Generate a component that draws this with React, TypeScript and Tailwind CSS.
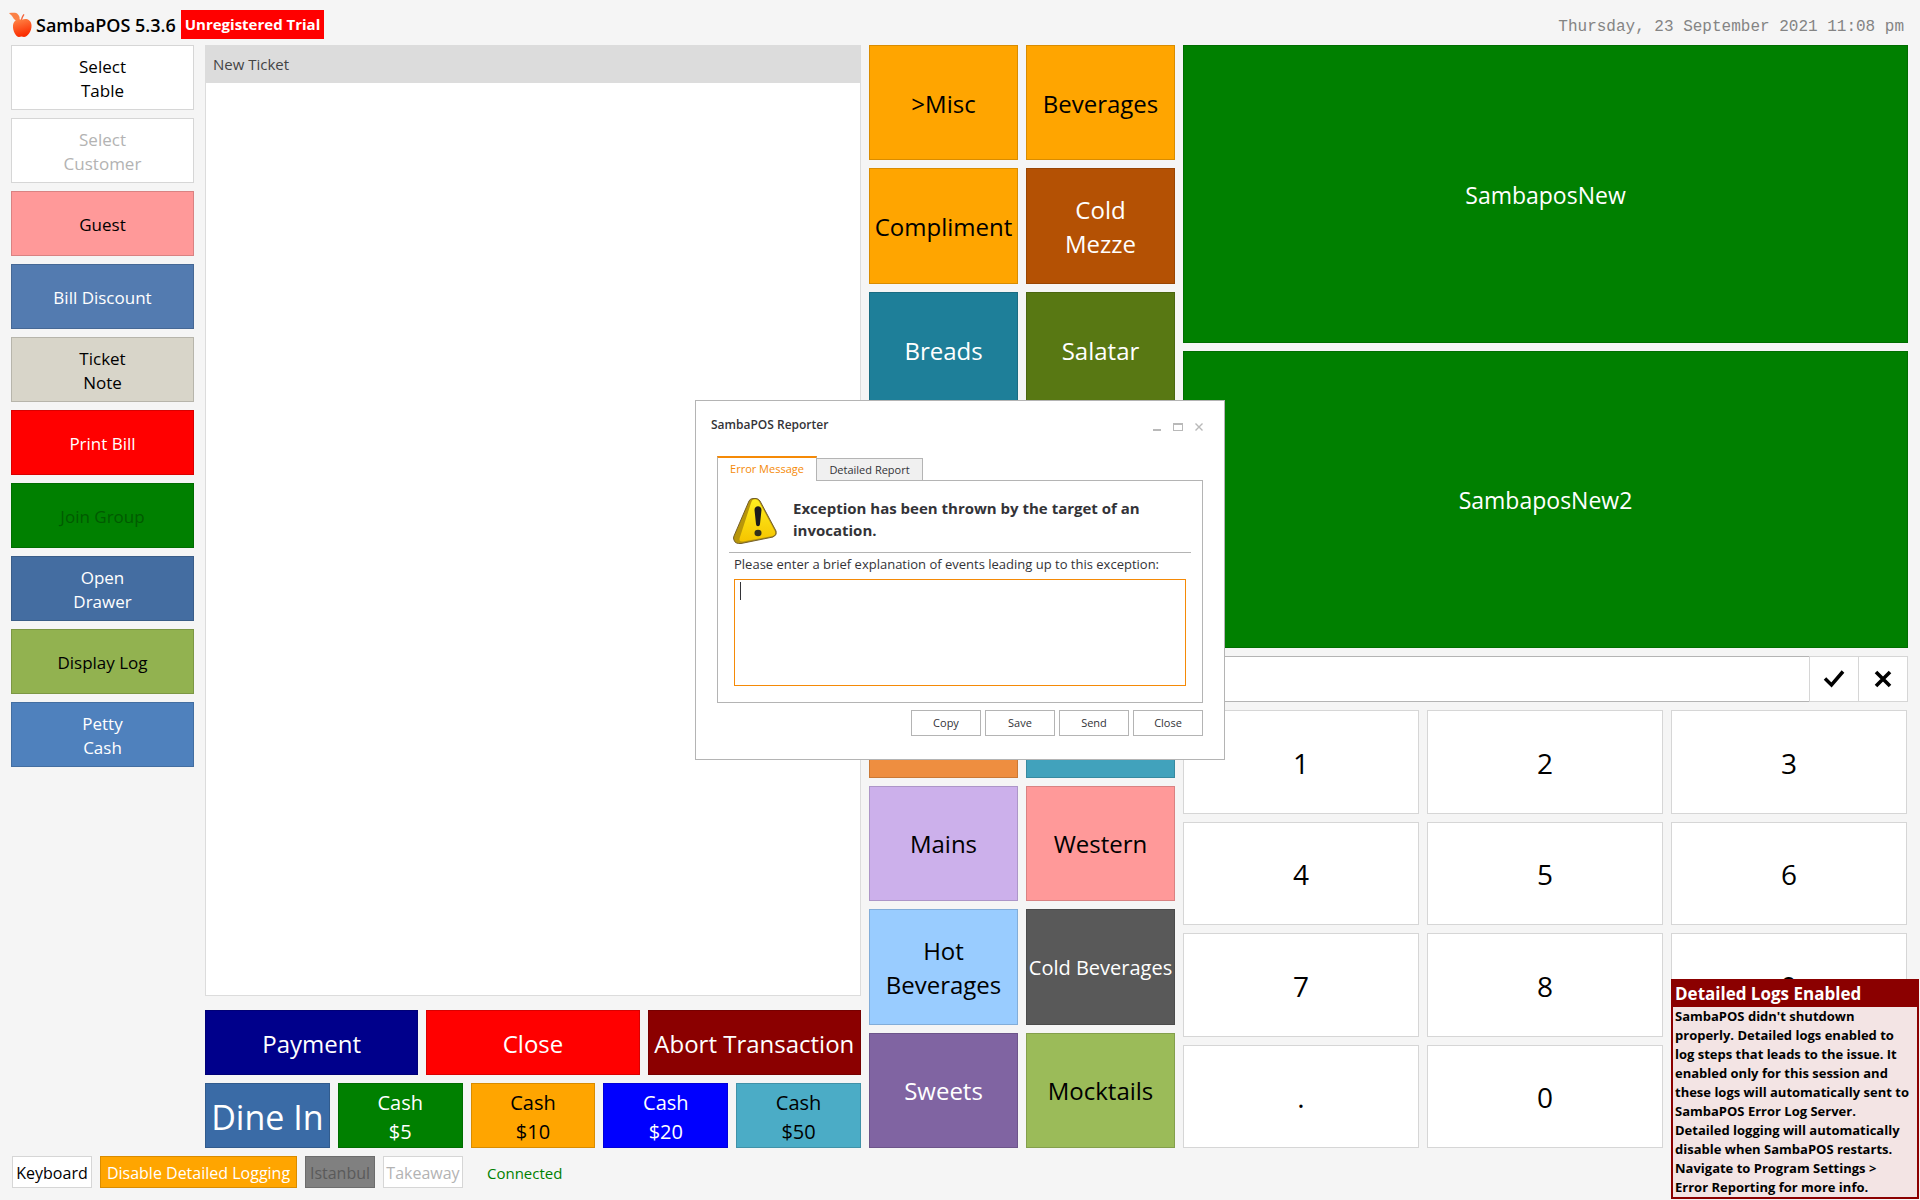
import React, { useState } from 'react';

const SIDE_BUTTONS = [
  { lines: ['Select', 'Table'], style: 'bg-white border-[#d6d6d6] text-black' },
  { lines: ['Select', 'Customer'], style: 'bg-white border-[#d6d6d6] text-[#b3b3b3]', disabled: true },
  { lines: ['Guest'], style: 'bg-[#ff9999] border-[#d98282] text-black' },
  { lines: ['Bill Discount'], style: 'bg-[#537bb0] border-[#466895] text-white' },
  { lines: ['Ticket', 'Note'], style: 'bg-[#d8d5c9] border-[#b7b5ab] text-black' },
  { lines: ['Print Bill'], style: 'bg-[#ff0000] border-[#d90000] text-white' },
  { lines: ['Join Group'], style: 'bg-[#008000] border-[#006d00] text-[#005a00]', disabled: true },
  { lines: ['Open', 'Drawer'], style: 'bg-[#446da1] border-[#3a5d89] text-white' },
  { lines: ['Display Log'], style: 'bg-[#92b250] border-[#7c9744] text-black' },
  { lines: ['Petty', 'Cash'], style: 'bg-[#4f81bd] border-[#436ea1] text-white' },
];

const CATEGORIES = [
  { name: '>Misc', style: 'bg-[#ffa500] border-[#d98c00] text-black text-2xl' },
  { name: 'Beverages', style: 'bg-[#ffa500] border-[#d98c00] text-black text-2xl' },
  { name: 'Compliment', style: 'bg-[#ffa500] border-[#d98c00] text-black text-2xl' },
  { name: 'Cold\nMezze', style: 'bg-[#b45104] border-[#994503] text-white text-2xl' },
  { name: 'Breads', style: 'bg-[#1e7f99] border-[#1a6c82] text-white text-2xl' },
  { name: 'Salatar', style: 'bg-[#587813] border-[#4b6610] text-white text-2xl' },
  // unnamed slots
  { name: '', style: 'bg-[#ee8e40] border-[#ca7936]' },
  { name: '', style: 'bg-[#41a2bc] border-[#378aa0]' },
  { name: '', style: 'bg-[#ee8e40] border-[#ca7936]' },
  { name: '', style: 'bg-[#41a2bc] border-[#378aa0]' },
  { name: '', style: 'bg-[#ee8e40] border-[#ca7936]' },
  { name: '', style: 'bg-[#41a2bc] border-[#378aa0]' },
  { name: 'Mains', style: 'bg-[#ccb0eb] border-[#ad96c8] text-black text-2xl' },
  { name: 'Western', style: 'bg-[#ff9999] border-[#d98282] text-black text-2xl' },
  { name: 'Hot\nBeverages', style: 'bg-[#99ccff] border-[#82add9] text-black text-2xl' },
  { name: 'Cold Beverages', style: 'bg-[#595959] border-[#4c4c4c] text-white text-xl' },
  { name: 'Sweets', style: 'bg-[#8064a2] border-[#6d558a] text-white text-2xl' },
  { name: 'Mocktails', style: 'bg-[#9bbb59] border-[#849f4c] text-black text-2xl' },
];

const PAYMENTS = [
  { name: 'Payment', style: 'bg-[#00008b] border-[#000076]' },
  { name: 'Close', style: 'bg-[#ff0000] border-[#d90000]' },
  { name: 'Abort Transaction', style: 'bg-[#8b0000] border-[#760000]' },
];

const CASH = [
  { name: 'Cash\n$5', style: 'bg-[#008000] border-[#006d00] text-white' },
  { name: 'Cash\n$10', style: 'bg-[#ffa500] border-[#d98c00] text-black' },
  { name: 'Cash\n$20', style: 'bg-[#0000ff] border-[#0000d9] text-white' },
  { name: 'Cash\n$50', style: 'bg-[#4bacc6] border-[#4092a8] text-black' },
];

const KEYS = ['1', '2', '3', '4', '5', '6', '7', '8', '9', '.', '0'];

function AppleLogo() {
  return (
    <svg viewBox="0 0 24 26" className="h-[26px] w-6" aria-hidden="true">
      <defs>
        <linearGradient id="apple" x1="0" y1="0" x2="0.3" y2="1">
          <stop offset="0" stopColor="#ff8a4a" />
          <stop offset="1" stopColor="#fb2c00" />
        </linearGradient>
      </defs>
      <path d="M0 1C4 1 7 0 9 2.500c2 2 2 4.500 1 6.500C7 9 5 7.500 4 5.500 3.500 4 1.500 2.500 0 1Z" fill="#fb8146" />
      <path d="M12 8c0-2 1-4 2.500-6l1 .8C14.500 4.500 13.500 6 13.300 8Z" fill="#f4633a" />
      <path d="M13 8c3-2 9-1 9.500 5 .5 6-4 12-7.500 12-1 0-1.500-.4-2.500-.4S11 25 10 25C7 25 3.500 19 4 13.500 4.500 7.500 10 6 13 8Z" fill="url(#apple)" />
    </svg>
  );
}

function WarningIcon() {
  return (
    <svg viewBox="0 0 44 48" className="h-12 w-11 shrink-0" aria-hidden="true">
      <defs>
        <linearGradient id="warn" x1="0" y1="0" x2="0" y2="1">
          <stop offset="0" stopColor="#fff01f" />
          <stop offset="1" stopColor="#f5c400" />
        </linearGradient>
      </defs>
      <path d="M16 4Q17 1.500 20 1.500H23Q25.500 1.500 27 4L43 34Q44.500 38 40 40L8 46.500Q2 47 1 43 0 41 1 39Z" fill="#b8960a" stroke="#75602a" />
      <path d="M19 3.500Q23 .5 26 4.500L42 34.500Q43 38 39.500 39L10 44.500Q5 45 7 40L18 6Z" fill="url(#warn)" />
      <path d="M21.500 13c0-5 7-5 7 0L27 27c-.3 3-3.700 3-4 0Z" fill="#1c1c1c" />
      <ellipse cx="25" cy="36" rx="3.500" ry="3.200" fill="#33301c" />
    </svg>
  );
}

function ReporterDialog() {
  const [note, setNote] = useState('');

  return (
    <div className="pointer-events-none fixed inset-0 z-40 flex items-center justify-center pb-10">
      <div role="dialog" aria-label="SambaPOS Reporter" className="pointer-events-auto flex h-[360px] w-[530px] flex-col border border-[#b4b4b4] bg-white px-[21px] text-[#333337]">
        <div className="-mx-[6px] flex h-[55px] items-center justify-between pr-[6px] pb-1">
          <h2 className="pb-1 text-xs font-semibold">SambaPOS Reporter</h2>
          <div className="flex items-center gap-3 text-[#b9b9b9]">
            <button aria-label="Minimize" className="flex h-2 w-2 items-end"><span className="h-[2px] w-full bg-[#b9b9b9]" /></button>
            <button aria-label="Maximize" className="h-2 w-[10px] border border-t-2 border-[#b9b9b9]" />
            <button aria-label="Close window">
              <svg viewBox="0 0 8 8" className="h-2 w-2" stroke="currentColor" strokeWidth="1.400"><path d="M.5.5l7 7M7.500.5l-7 7" /></svg>
            </button>
          </div>
        </div>

        <div role="tablist" className="z-10 -mb-px flex items-end text-[11px]">
          <button role="tab" aria-selected="true" className="h-[25px] w-[100px] border-x border-t-2 border-x-[#b4b4b4] border-t-[#f58a07] bg-white text-[#f58a07]">Error Message</button>
          <button role="tab" aria-selected="false" className="h-[23px] w-[106px] border border-l-0 border-[#b4b4b4] bg-[#f0f0f0] pt-[2px]">Detailed Report</button>
        </div>

        <div className="h-[223px] border border-[#b4b4b4] px-[11px] pt-4">
          <div className="flex h-[56px] gap-4 border-b border-[#b4b4b4] pl-1">
            <WarningIcon />
            <p className="text-[15px] leading-[22px] font-bold">Exception has been thrown by the target of an invocation.</p>
          </div>
          <div className="px-[5px]">
            <label htmlFor="note" className="block pt-[2px] text-[13px] leading-[18px]">Please enter a brief explanation of events leading up to this exception:</label>
            <div className="relative mt-[6px]">
              <textarea id="note" value={note} onChange={(e) => setNote(e.target.value)} className="block h-[107px] w-full resize-none border border-[#f58a07] px-[5px] py-[3px] text-[13px] outline-none" />
              {!note && <span className="pointer-events-none absolute top-[3px] left-[6px] h-[18px] w-px bg-[#333337]" />}
            </div>
          </div>
        </div>

        <div className="mt-[7px] flex justify-end gap-1 text-[11px]">
          {['Copy', 'Save', 'Send', 'Close'].map((label) => (
            <button key={label} className="h-[26px] w-[70px] border border-[#b4b4b4] bg-white pt-px">{label}</button>
          ))}
        </div>
      </div>
    </div>
  );
}

export default function App() {
  const [entry, setEntry] = useState('');

  return (
    <div className="flex min-h-screen flex-col bg-[#f5f5f5] font-['Open_Sans','Noto_Sans',sans-serif] text-black">
      <header className="flex h-[45px] items-center justify-between pt-1 pr-4 pl-[9px]">
        <div className="flex items-center">
          <AppleLogo />
          <h1 className="ml-[3px] text-lg font-semibold">SambaPOS 5.3.6</h1>
          <span className="ml-[5px] bg-[#ff0000] px-1 text-[15px] leading-[29px] font-bold text-white">Unregistered Trial</span>
        </div>
        <time className="pt-1 font-['Liberation_Mono',monospace] text-base text-[#848484]">Thursday, 23 September 2021 11:08 pm</time>
      </header>

      <main className="flex flex-1 gap-2 pr-3 pl-[11px]">
        <nav className="mr-[3px] flex w-[183px] shrink-0 flex-col gap-2">
          {SIDE_BUTTONS.map((b) => (
            <button key={b.lines.join(' ')} disabled={b.disabled} className={`h-[65px] border pt-[2px] text-[17px] leading-6 whitespace-pre-line ${b.style}`}>
              {b.lines.join('\n')}
            </button>
          ))}
        </nav>

        {/* ticket + payment buttons */}
        <section className="flex min-w-0 flex-[656] flex-col">
          <div className="flex-1 border border-[#dcdcdc] bg-white">
            <div className="h-[37px] bg-[#dcdcdc] px-[7px] text-[15px] leading-[37px] text-[#444444]">New Ticket</div>
          </div>
          <div className="mt-[14px] grid grid-cols-3 gap-2">
            {PAYMENTS.map((p) => (
              <button key={p.name} className={`h-[65px] border pt-[2px] text-2xl whitespace-nowrap text-white ${p.style}`}>{p.name}</button>
            ))}
          </div>
          <div className="mt-2 grid grid-cols-5 gap-2">
            <button className="h-[65px] border border-[#315b8d] bg-[#3a6ba6] pt-1 text-[34px] whitespace-nowrap text-white">Dine In</button>
            {CASH.map((c) => (
              <button key={c.name} className={`h-[65px] border pt-[2px] text-xl leading-[29px] whitespace-pre-line ${c.style}`}>{c.name}</button>
            ))}
          </div>
        </section>

        <section className="grid min-w-0 flex-[306] auto-rows-fr grid-cols-2 gap-2">
          {CATEGORIES.map((c, i) => (
            <button key={i} className={`border pt-[2px] leading-[34px] whitespace-pre ${c.style}`}>{c.name}</button>
          ))}
        </section>

        <section className="flex min-w-0 flex-[725] flex-col gap-2">
          <div className="grid flex-[603] auto-rows-fr gap-2 text-[23px] text-white">
            <button className="border border-[#006d00] bg-[#008000] pt-[2px]">SambaposNew</button>
            <button className="border border-[#006d00] bg-[#008000] pt-[2px]">SambaposNew2</button>
          </div>
          <div className="flex h-[46px]">
            <input aria-label="Number entry" value={entry} onChange={(e) => setEntry(e.target.value)} className="min-w-0 flex-1 border border-r-0 border-[#b4b4b4] bg-white px-3 text-2xl outline-none" />
            <button aria-label="Accept" className="flex w-[49px] items-center justify-center border border-r-0 border-[#d6d6d6] bg-white">
              <svg viewBox="0 0 22 18" className="h-[18px] w-[22px]" fill="none" stroke="currentColor" strokeWidth="3.500"><path d="M2 8.500L8.500 15 20 1.500" /></svg>
            </button>
            <button aria-label="Clear" onClick={() => setEntry('')} className="flex w-[50px] items-center justify-center border border-[#d6d6d6] bg-white">
              <svg viewBox="0 0 18 18" className="h-[18px] w-[18px]" stroke="currentColor" strokeWidth="3.600"><path d="M2 2l14 14M16 2L2 16" /></svg>
            </button>
          </div>
          <div className="grid flex-[438] auto-rows-fr grid-cols-3 gap-2 pr-px">
            {KEYS.map((k) => (
              <button key={k} onClick={() => setEntry(entry + k)} className="border border-[#d6d6d6] bg-white pt-[2px] text-[28px]">{k}</button>
            ))}
          </div>
        </section>
      </main>

      <footer className="flex h-[52px] items-start gap-2 pt-2 pl-3 text-base whitespace-nowrap">
        <button className="h-8 w-20 border border-[#d6d6d6] bg-white pt-px">Keyboard</button>
        <button className="h-8 w-[197px] border border-[#d98c00] bg-[#ffa500] pt-px text-white">Disable Detailed Logging</button>
        <button disabled className="h-8 w-[70px] border border-[#6d6d6d] bg-[#808080] pt-px text-[#5a5a5a]">Istanbul</button>
        <button disabled className="h-8 w-20 border border-[#d6d6d6] bg-white pt-px text-[#b3b3b3]">Takeaway</button>
        <span className="ml-4 pt-px text-[15px] leading-8 text-[#008000]">Connected</span>
      </footer>

      <ReporterDialog />

      <aside role="status" className="fixed right-px bottom-px z-50 w-[248px] border-2 border-t-0 border-[#8b0000] bg-[#f3e4e4] font-bold">
        <h3 className="bg-[#8b0000] px-[2px] pt-[2px] text-[17px] leading-[26px] text-white">Detailed Logs Enabled</h3>
        <p className="px-[2px] text-[13px] leading-[19px] whitespace-pre">
          {"SambaPOS didn't shutdown\nproperly. Detailed logs enabled to\nlog steps that leads to the issue. It\nenabled only for this session and\nthese logs will automatically sent to\nSambaPOS Error Log Server.\nDetailed logging will automatically\ndisable when SambaPOS restarts.\nNavigate to Program Settings >\nError Reporting for more info."}
        </p>
      </aside>
    </div>
  );
}
